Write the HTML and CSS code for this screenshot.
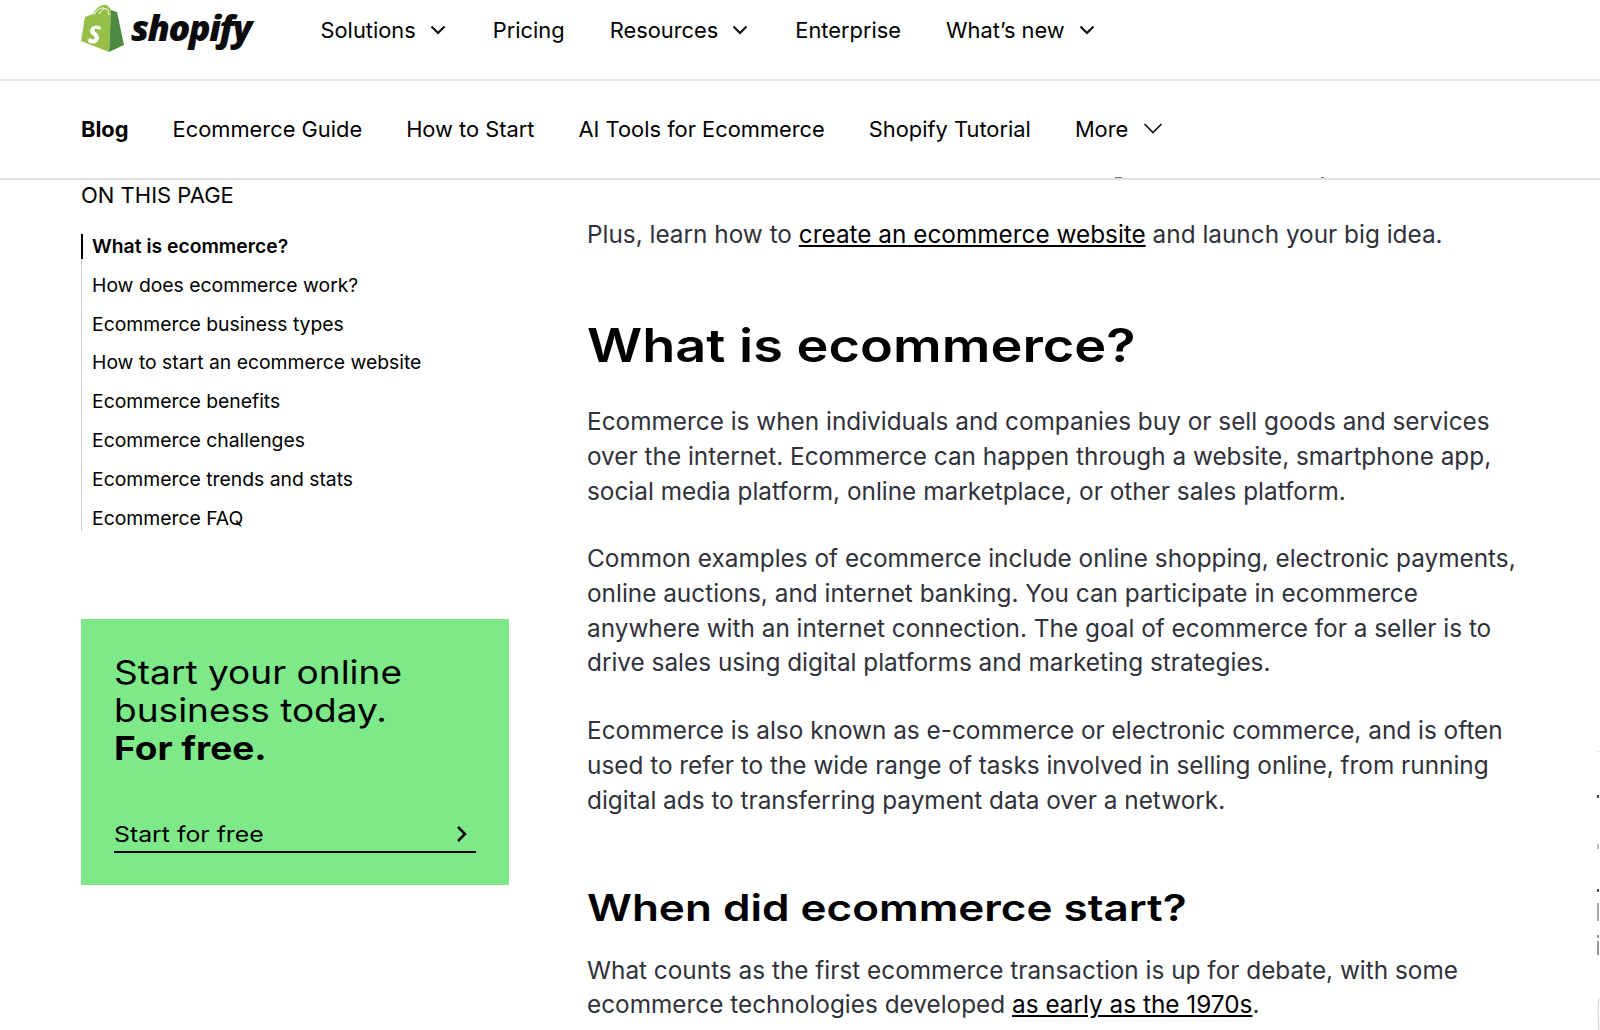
FILE: index.html
```html
<!DOCTYPE html>
<html lang="en">

<head>
    <meta charset="UTF-8">
    <title>What is ecommerce?</title>
    <link rel="stylesheet" href="styles.css">
</head>

<body>
    <header class="top-nav">
        <a class="logo">
            <svg class="logo-bag" width="44" height="48" viewBox="0 0 44 48">
                <path d="M1 37 L5 13 L13 10 Q17 2 23 1 Q28 0 31 6 L29 48 Z" fill="#95bf47"/>
                <path d="M31 6 L37 8 L44 41 L29 48 Z" fill="#4f8a43"/>
                <path d="M14 11 Q18 3 24 4 M19 10 Q23 3 27 5 Q29 7 29 11" fill="none" stroke="#fff" stroke-width="1"/>
                <path d="M21 23 Q16 20 12 23 Q8 27 12 31 Q16 33 14 35 Q12 36 9 34 L8 38 Q13 41 17 38 Q21 34 17 29 Q13 27 15 25 Q17 24 20 26 Z" fill="#fff"/>
            </svg>
            <span class="logo-text">shopify</span>
        </a>
        <nav class="top-links">
            <a>Solutions <svg class="chev" width="16" height="10" viewBox="0 0 16 10"><path d="M1.5 1.5 L8 8 L14.5 1.5"/></svg></a>
            <a>Pricing</a>
            <a>Resources <svg class="chev" width="16" height="10" viewBox="0 0 16 10"><path d="M1.5 1.5 L8 8 L14.5 1.5"/></svg></a>
            <a>Enterprise</a>
            <a>What’s new <svg class="chev" width="16" height="10" viewBox="0 0 16 10"><path d="M1.5 1.5 L8 8 L14.5 1.5"/></svg></a>
        </nav>
    </header>

    <nav class="sub-nav">
        <a class="active">Blog</a>
        <a>Ecommerce Guide</a>
        <a>How to Start</a>
        <a>AI Tools for Ecommerce</a>
        <a>Shopify Tutorial</a>
        <a>More <svg class="chev thin" width="20" height="11" viewBox="0 0 20 11"><path d="M1.5 1 L10 9.5 L18.5 1"/></svg></a>
        <i class="clip-mark clip-a"></i>
        <i class="clip-mark clip-b"></i>
    </nav>

    <div class="page">
        <aside class="sidebar">
            <div class="toc-title">ON THIS PAGE</div>
            <ul class="toc">
                <li class="current">What is ecommerce?</li>
                <li>How does ecommerce work?</li>
                <li>Ecommerce business types</li>
                <li>How to start an ecommerce website</li>
                <li>Ecommerce benefits</li>
                <li>Ecommerce challenges</li>
                <li>Ecommerce trends and stats</li>
                <li>Ecommerce FAQ</li>
            </ul>
            <div class="promo">
                <p class="promo-title">Start your online<br>business today.<br><b>For free.</b></p>
                <a class="promo-link"><span>Start for free</span>
                    <svg width="12" height="18" viewBox="0 0 12 18"><path d="M2 2 L9 9 L2 16"/></svg>
                </a>
            </div>
        </aside>

        <main class="article">
            <p class="intro">Plus, learn how to <a>create an ecommerce website</a> and launch your big idea.</p>
            <h2 class="h-big"><span>What is ecommerce?</span></h2>
            <p>Ecommerce is when individuals and companies buy or sell goods and services<br>over the internet. Ecommerce can happen through a website, smartphone app,<br>social media platform, online marketplace, or other sales platform.</p>
            <p>Common examples of ecommerce include online shopping, electronic payments,<br>online auctions, and internet banking. You can participate in ecommerce<br>anywhere with an internet connection. The goal of ecommerce for a seller is to<br>drive sales using digital platforms and marketing strategies.</p>
            <p>Ecommerce is also known as e-commerce or electronic commerce, and is often<br>used to refer to the wide range of tasks involved in selling online, from running<br>digital ads to transferring payment data over a network.</p>
            <h3 class="h-small"><span>When did ecommerce start?</span></h3>
            <p>What counts as the first ecommerce transaction is up for debate, with some<br>ecommerce technologies developed <a>as early as the 1970s</a>.</p>
        </main>
    </div>

    <!-- slivers of something cut off at the right edge -->
    <svg class="edge-bits" width="3" height="290" viewBox="0 0 3 290">
        <rect x="0" y="11" width="2" height="1" fill="#ddd"/>
        <rect x="0" y="55" width="2" height="3" fill="#444"/>
        <rect x="0" y="104" width="2" height="5" fill="#bbb"/>
        <rect x="0" y="149" width="2" height="3" fill="#555"/>
        <rect x="0" y="163" width="2" height="18" fill="#aaa"/>
        <rect x="0" y="195" width="2" height="3" fill="#999"/>
        <rect x="0" y="201" width="2" height="14" fill="#999"/>
        <path d="M2 258 Q0 270 2 290" fill="none" stroke="#ccc" stroke-width="1"/>
    </svg>
</body>

</html>
```

FILE: styles.css
```css
* {
    box-sizing: border-box;
}

html, body {
    height: 1030px;
    overflow: hidden;
}

body {
    margin: 0;
    position: relative;
    background: #fff;
    color: #000;
    font-family: Inter, "Liberation Sans", sans-serif;
}

.top-nav {
    display: flex;
    align-items: flex-start;
    height: 81px;
    padding-left: 80px;
    border-bottom: 2px solid #e6e6e6;
}

.logo {
    display: flex;
    align-items: flex-start;
    width: 240.5px;
    height: 60px;
    padding-top: 4px;
    gap: 7px;
}

.logo-text {
    font-family: "Open Sans", sans-serif;
    font-size: 36px;
    line-height: 48px;
    font-weight: 800;
    font-style: italic;
    letter-spacing: -1.5px;
    color: #0c0c0c;
}

.top-links {
    display: flex;
    gap: 45px;
    height: 60px;
    align-items: center;
    font-size: 21.85px;
}

.top-links a, .sub-nav a {
    display: flex;
    align-items: center;
    gap: 8px;
}

.chev path {
    fill: none;
    stroke: #111;
    stroke-width: 2.2;
}

.chev {
    margin-left: 6px;
    margin-right: 2px;
}

.chev.thin {
    margin-left: 7px;
}

.chev.thin path {
    stroke-width: 1.6;
}

.sub-nav {
    position: relative;
    display: flex;
    align-items: center;
    gap: 44px;
    height: 99px;
    padding: 0 0 2px 81px;
    border-bottom: 2px solid #e0e0e0;
    font-size: 21.85px;
}

.sub-nav .active {
    font-weight: 700;
}

/* bottoms of a scrolled line, cut off by the bar */
.clip-mark {
    position: absolute;
    bottom: 0;
    height: 1px;
    background: #777;
}

.clip-a {
    left: 1115px;
    width: 7px;
}

.clip-b {
    left: 1321px;
    width: 3px;
}

.page {
    display: flex;
    padding-left: 81px;
}

.sidebar {
    width: 506px;
    padding-top: 1px;
}

.toc-title {
    font-size: 22px;
    line-height: 28px;
}

.toc {
    list-style: none;
    margin: 25px 0 0;
    padding: 0 0 0 10px;
    width: 428px;
    border-left: 1px solid #d0d0d0;
    font-size: 19.35px;
}

.toc li {
    height: 38.8px;
    line-height: 25px;
}

.toc li:last-child {
    height: 25px;
}

.toc .current {
    position: relative;
    font-weight: 600;
}

.toc .current::before {
    content: "";
    position: absolute;
    left: -11px;
    top: 0;
    width: 2px;
    height: 25px;
    background: #000;
}

.promo {
    width: 428px;
    height: 266px;
    margin-top: 88px;
    padding: 35px 33px 0;
    background: #7ee989;
}

.promo-title {
    margin: 0;
    font-size: 32.5px;
    line-height: 38px;
    transform: scaleX(1.14);
    transform-origin: left;
}

.promo-title b {
    font-weight: 700;
}

.promo-link {
    display: flex;
    justify-content: space-between;
    align-items: center;
    margin-top: 49px;
    height: 36px;
    padding-right: 8px;
    border-bottom: 2px solid #000;
    font-size: 21.5px;
}

.promo-link span {
    display: inline-block;
    transform: scaleX(1.155);
    transform-origin: left;
}

.promo-link svg path {
    fill: none;
    stroke: #000;
    stroke-width: 2.5;
}

.article {
    width: 960px;
    color: #30313a;
    font-size: 24.35px;
    line-height: 34.7px;
}

.article p {
    margin: 0 0 33px;
}

.article a {
    color: #000;
    text-decoration: underline;
}

.article .intro {
    margin-top: 37px;
}

.h-big, .h-small {
    margin: 0;
    color: #000;
    font-weight: 600;
}

.h-big span, .h-small span {
    display: inline-block;
    transform-origin: left;
}

.h-big {
    margin: 63px 0 29.5px;
    font-size: 46px;
    line-height: 60px;
}

.h-big span {
    transform: scaleX(1.176);
}

.h-small {
    margin: 67px 0 20.5px;
    font-size: 37px;
    line-height: 48px;
}

.h-small span {
    transform: scaleX(1.19);
}

.edge-bits {
    position: absolute;
    right: 0;
    top: 740px;
}
```
